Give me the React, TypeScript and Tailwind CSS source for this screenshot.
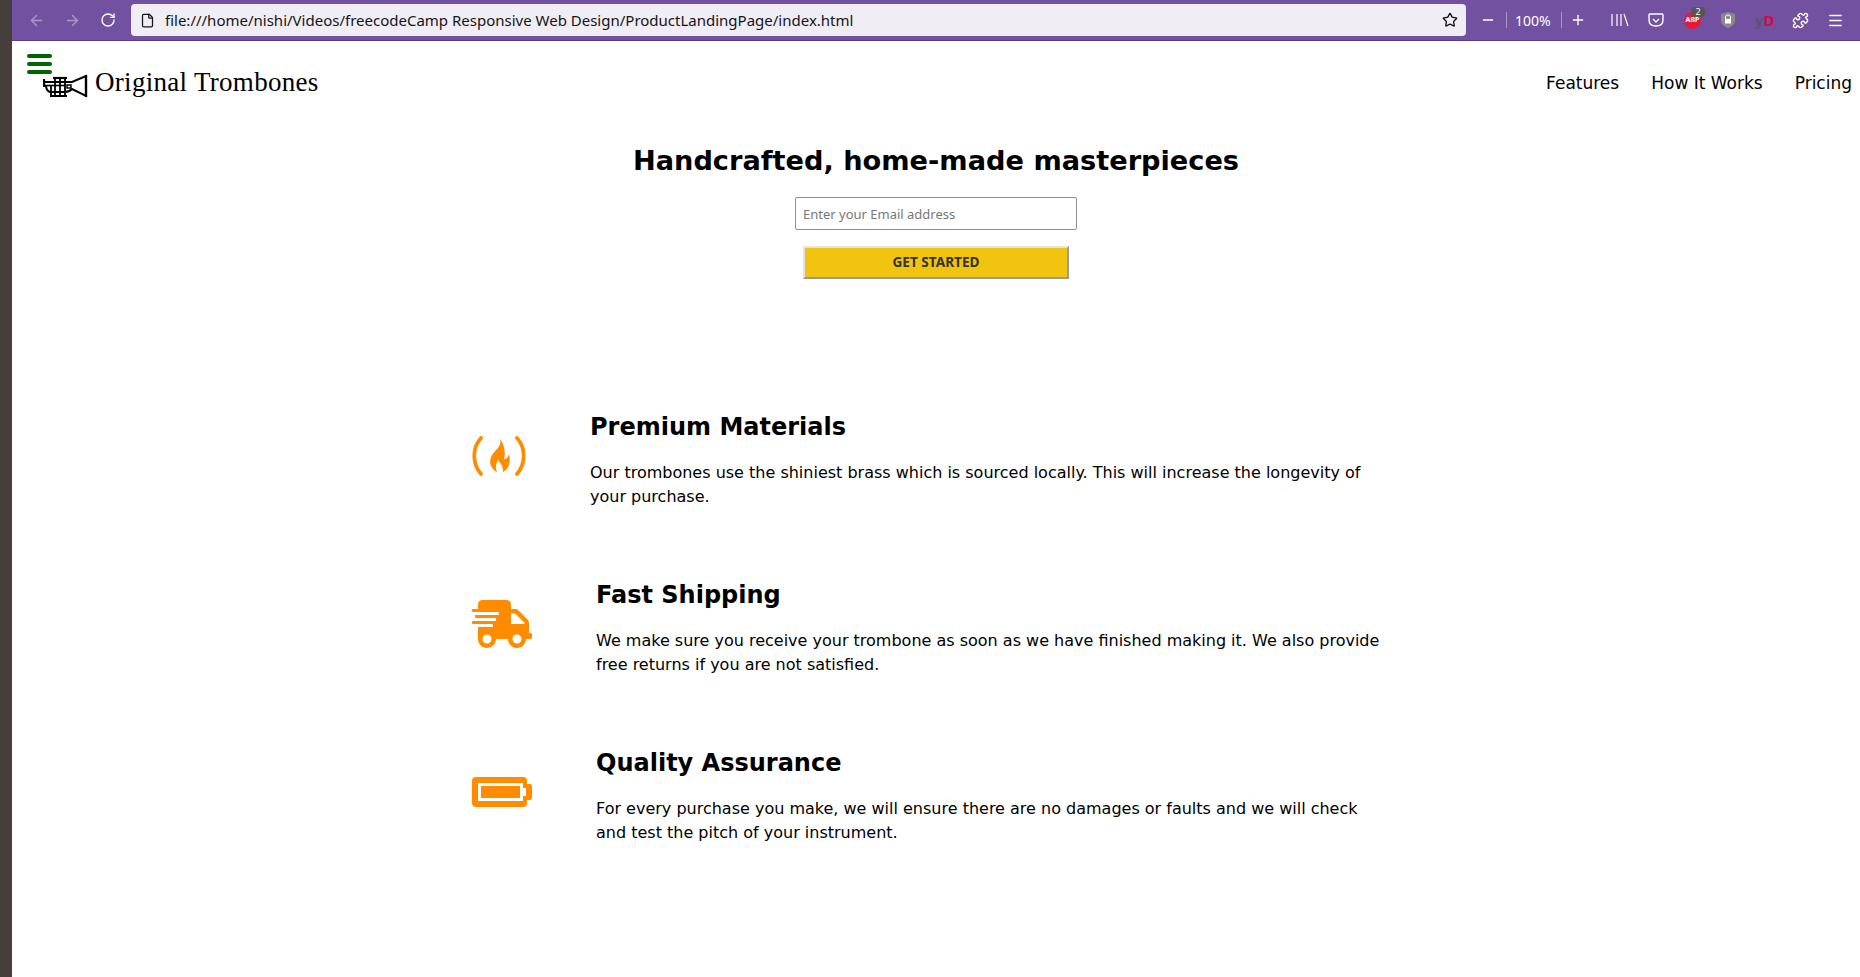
import { ArrowLeft, ArrowRight, RotateCw, File, Star, Minus, Plus, Menu, Puzzle } from 'lucide-react';
import { FaShippingFast } from 'react-icons/fa';

const features = [
  {
    title: 'Premium Materials',
    text: 'Our trombones use the shiniest brass which is sourced locally. This will increase the longevity of your purchase.',
    icon: <CampIcon />,
  },
  {
    title: 'Fast Shipping',
    text: 'We make sure you receive your trombone as soon as we have finished making it. We also provide free returns if you are not satisfied.',
    icon: <FaShippingFast className="w-[60px] h-[48px]" />,
  },
  {
    title: 'Quality Assurance',
    text: 'For every purchase you make, we will ensure there are no damages or faults and we will check and test the pitch of your instrument.',
    icon: <BatteryIcon />,
  },
];

function CampIcon() {
  return (
    <svg width="54" height="40" viewBox="0 0 54 40" fill="none">
      <path d="M9 2 C0 12 0 27 9 38" stroke="currentColor" strokeWidth="3.8" strokeLinecap="round" />
      <path d="M45 2 C54 12 54 27 45 38" stroke="currentColor" strokeWidth="3.8" strokeLinecap="round" />
      <path
        d="M28 3 C30 10 24 13 20 19 C16 26 19 33 25 36 C23 31 24 28 26 24 C29 28 31 30 31 36 C37 33 39 26 37 18 C36 21 34 24 32 23 C34 16 32 8 28 3 Z"
        fill="currentColor"
      />
    </svg>
  );
}

function BatteryIcon() {
  return (
    <svg width="60" height="30" viewBox="0 0 60 30" className="my-[9px]">
      <path
        d="M4 0 H51 Q55 0 55 4 V7 H58 Q60 7 60 9 V21 Q60 23 58 23 H55 V26 Q55 30 51 30 H4 Q0 30 0 26 V4 Q0 0 4 0 Z M6 6 V24 H51 V19 H54 V11 H51 V6 Z"
        fill="currentColor"
        fillRule="evenodd"
      />
      <rect x="9" y="9" width="39" height="12" fill="currentColor" />
    </svg>
  );
}

function Trumpet() {
  return (
    <svg width="45" height="24" viewBox="0 0 45 24" fill="none" stroke="black" strokeWidth="2">
      <path d="M1 8 H29 L43 2 V22 L29 15 Q26 18 22 18 H7 Q3 17 3 11" />
      <path d="M1 5 V13" strokeWidth="2.4" />
      <path d="M1 11.5 H22" strokeWidth="1.6" />
      <path d="M8 11 V21 M12 4 V22 M17 4 V22 M22 4 V22" strokeWidth="1.8" />
      <path d="M10 4 H24" strokeWidth="2.2" />
      <path d="M7 22 H24" />
      <path d="M43 1 V23" strokeWidth="2.4" />
      <path d="M24 11 H28 V14 H24 Z" strokeWidth="1.4" />
    </svg>
  );
}

function Browser() {
  return (
    <div className="h-[41px] shrink-0 bg-[#7151a0] border-b border-[#5b3f86] flex items-center text-white font-['Noto_Sans',sans-serif]">
      <ArrowLeft size={17} className="shrink-0 ml-[16px] opacity-40" />
      <ArrowRight size={17} className="shrink-0 ml-[19px] opacity-40" />
      <RotateCw size={16} className="shrink-0 ml-[19px]" />
      <div className="shrink-0 ml-[15px] w-[1335px] h-[32px] rounded bg-[#f0edf5] flex items-center text-[#15141a] text-[15px]">
        <File size={15} className="ml-[9px]" />
        <span className="ml-[10px]">file:///home/nishi/Videos/freecodeCamp Responsive Web Design/ProductLandingPage/index.html</span>
        <Star size={16} className="ml-auto mr-[8px]" />
      </div>
      <Minus size={16} className="shrink-0 ml-[14px]" />
      <div className="shrink-0 ml-[10px] w-px h-4 bg-white/40" />
      <span className="shrink-0 ml-[8px] w-[37px] text-[14px]">100%</span>
      <div className="shrink-0 ml-[9px] w-px h-4 bg-white/40" />
      <Plus size={16} className="shrink-0 ml-[8px]" />
      <svg width="20" height="16" viewBox="0 0 20 16" fill="none" stroke="white" strokeWidth="1.2" className="shrink-0 ml-[24px]">
        <path d="M2 2 V14 M7 2 V14 M11 2 V14 M14 2 L18 14" />
      </svg>
      <svg width="16" height="16" viewBox="0 0 16 16" fill="none" stroke="white" strokeWidth="1.4" className="shrink-0 ml-[18px]">
        <path d="M2 2 H14 Q15 2 15 3 V8 Q15 14 8 14 Q1 14 1 8 V3 Q1 2 2 2 Z" />
        <path d="M5 7 L8 10 L11 7" />
      </svg>
      <div className="shrink-0 relative ml-[20px] w-[17px] h-[17px] rounded-full bg-[#e8173e] text-[7px] font-bold flex items-center justify-center">
        ABP
        <span className="absolute -top-[5px] left-[7px] h-[10px] w-[14px] bg-[#555] rounded-sm text-[9px] font-normal leading-[10px] text-center">2</span>
      </div>
      <svg width="14" height="16" viewBox="0 0 14 16" className="shrink-0 ml-[20px]">
        <path d="M7 0 L14 2 V9 Q14 13 7 16 Q0 13 0 9 V2 Z" fill="#8a8a8a" />
        <path d="M4.5 7 V5 Q4.5 3 7 3 Q9.5 3 9.5 5 V7" fill="none" stroke="white" />
        <rect x="4" y="7" width="6" height="4.5" fill="white" />
      </svg>
      <span className="shrink-0 ml-[20px] w-[18px] text-[15px] font-bold text-[#5f5275]">y<span className="text-[#d9083c]">D</span></span>
      <Puzzle size={17} className="shrink-0 ml-[19px]" />
      <Menu size={17} className="shrink-0 ml-[18px]" />
    </div>
  );
}

export default function App() {
  return (
    <div className="h-[977px] overflow-hidden flex bg-white text-black font-['DejaVu_Sans',sans-serif]">
      <div className="w-[12px] shrink-0 bg-[#453e3b]" />
      <div className="flex-1 min-w-0 flex flex-col relative">
        <Browser />

        <div className="absolute left-[15px] top-[54px] flex flex-col gap-[4px]">
          <div className="w-[25px] h-[4px] rounded-full bg-[#006400]" />
          <div className="w-[25px] h-[4px] rounded-full bg-[#006400]" />
          <div className="w-[25px] h-[4px] rounded-full bg-[#006400]" />
        </div>

        <header className="h-[86px] shrink-0 flex items-center">
          <div className="ml-[31px] mt-[4px]"><Trumpet /></div>
          <div className="ml-[7px] mb-[4px] text-[27px] font-['Liberation_Serif',serif] tracking-[0.3px]">Original Trombones</div>
          <nav className="ml-auto flex gap-[32px] text-[17px] pr-[8px]">
            <span>Features</span>
            <span>How It Works</span>
            <span>Pricing</span>
          </nav>
        </header>

        <section className="mt-[14px] flex flex-col items-center">
          <h1 className="text-[27.2px] leading-[40px] font-bold">Handcrafted, home-made masterpieces</h1>
          <input
            readOnly
            placeholder="Enter your Email address"
            className="mt-[16px] w-[282px] h-[33px] px-[7px] border border-[#8f8f9d] rounded-[2px] text-[13px] font-['Noto_Sans',sans-serif] placeholder:text-[#777]"
          />
          <button className="mt-[16px] w-[266px] h-[33px] bg-[#f1c40f] border-2 border-t-[#e3e3e3] border-l-[#e3e3e3] border-r-[#999] border-b-[#999] text-[13.6px] font-bold text-[#333] font-['Noto_Sans',sans-serif]">
            GET STARTED
          </button>
        </section>

        <section className="mt-[120px] ml-[460px] w-[918px] flex flex-col gap-[50px]">
          {features.map((f) => (
            <div key={f.title} className="flex items-center gap-[64px] h-[118px]">
              <div className="text-[#ff8c00] shrink-0 mb-[4px]">{f.icon}</div>
              <div className="mt-[1px]">
                <h2 className="text-[24px] leading-[36px] font-bold">{f.title}</h2>
                <p className="mt-[16px] text-[16px] leading-[24px]">{f.text}</p>
              </div>
            </div>
          ))}
        </section>
      </div>
    </div>
  );
}
